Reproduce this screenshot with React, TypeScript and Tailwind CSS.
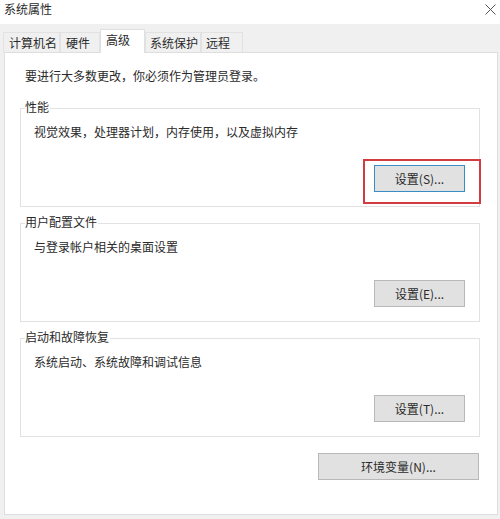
import React from "react";

const font = { fontFamily: '"Noto Sans CJK SC", "Noto Sans", sans-serif' };

type Tab = { label: string; w: string; pl: string; active?: boolean };

const tabs: Tab[] = [
  { label: "计算机名", w: "w-[57px]", pl: "pl-[5px]" },
  { label: "硬件", w: "w-[40px]", pl: "pl-[5px]" },
  { label: "高级", w: "w-[45px]", pl: "pl-[5px]", active: true },
  { label: "系统保护", w: "w-[56px]", pl: "pl-[4px]" },
  { label: "远程", w: "w-[42px]", pl: "pl-[4px]" },
];

function Btn({ children, focused }: { children: React.ReactNode; focused?: boolean }) {
  return (
    <div
      className={`w-[91px] h-[27px] flex items-center justify-center bg-[#e1e1e1] border text-[12px] leading-[16px] text-[#2a2a2a] ${
        focused ? "border-[#3a8cc4]" : "border-[#b8b8b8]"
      }`}
    >
      {children}
    </div>
  );
}

function Group({
  title,
  desc,
  button,
  mt,
}: {
  title: string;
  desc: string;
  button: React.ReactNode;
  mt: string;
}) {
  return (
    <div className={`relative ${mt} ml-[15px] w-[460px] h-[99px] border border-[#e2e2e2] flex flex-col`}>
      <div className="absolute -top-[10px] left-[4px] bg-white pr-[1px] text-[12px] leading-[16px] text-[#2a2a2a]">
        {title}
      </div>
      <div className="pt-[15px] pl-[13px] text-[12px] leading-[16px] text-[#2a2a2a]">{desc}</div>
      <div className="mt-auto pb-[14px] pr-[14px] flex justify-end">{button}</div>
    </div>
  );
}

export default function App() {
  return (
    <div className="w-[500px] h-[519px] bg-[#f0f0f0] flex flex-col overflow-hidden" style={font}>
      {/* title bar */}
      <div className="h-[24px] bg-white flex items-start justify-between pl-[4px] pr-[3px] pt-[1px]">
        <span className="text-[12px] leading-[16px] text-[#2a2a2a]">系统属性</span>
        <svg width="11" height="11" viewBox="0 0 11 11" className="mt-[3px] mr-[1px]">
          <path d="M0.5 0.5 L10.5 10.5 M10.5 0.5 L0.5 10.5" stroke="#555" strokeWidth="1" fill="none" />
        </svg>
      </div>

      {/* tab strip */}
      <div className="h-[28px] flex items-end pl-[3px]">
        {tabs.map((t) =>
          t.active ? (
            <div
              key={t.label}
              className={`${t.w} ${t.pl} relative z-10 -mb-[1px] h-[24px] bg-white border border-b-0 border-[#e0e0e0] text-[12px] leading-[20px] text-[#2a2a2a]`}
            >
              {t.label}
            </div>
          ) : (
            <div
              key={t.label}
              className={`${t.w} ${t.pl} h-[20px] bg-[#f0f0f0] border border-b-0 border-[#e2e2e2] text-[12px] leading-[20px] text-[#2a2a2a]`}
            >
              {t.label}
            </div>
          )
        )}
      </div>

      {/* panel */}
      <div className="ml-[4px] w-[494px] h-[463px] bg-white border border-[#dedede] flex flex-col">
        <div className="pt-[15px] pl-[20px] text-[12px] leading-[16px] text-[#2a2a2a]">
          要进行大多数更改，你必须作为管理员登录。
        </div>

        <Group
          mt="mt-[24px]"
          title="性能"
          desc="视觉效果，处理器计划，内存使用，以及虚拟内存"
          button={
            <div className="relative">
              <Btn focused>设置(S)...</Btn>
              <div className="absolute -left-[11px] -right-[16px] -top-[6px] -bottom-[12px] border-2 border-[#d23c41]" />
            </div>
          }
        />

        <Group
          mt="mt-[16px]"
          title="用户配置文件"
          desc="与登录帐户相关的桌面设置"
          button={<Btn>设置(E)...</Btn>}
        />

        <Group
          mt="mt-[16px]"
          title="启动和故障恢复"
          desc="系统启动、系统故障和调试信息"
          button={<Btn>设置(T)...</Btn>}
        />

        <div className="mt-[16px] ml-[313px] w-[161px] h-[27px] flex items-center justify-center bg-[#e1e1e1] border border-[#b8b8b8] text-[12px] leading-[16px] text-[#2a2a2a]">
          环境变量(N)...
        </div>
      </div>
    </div>
  );
}
